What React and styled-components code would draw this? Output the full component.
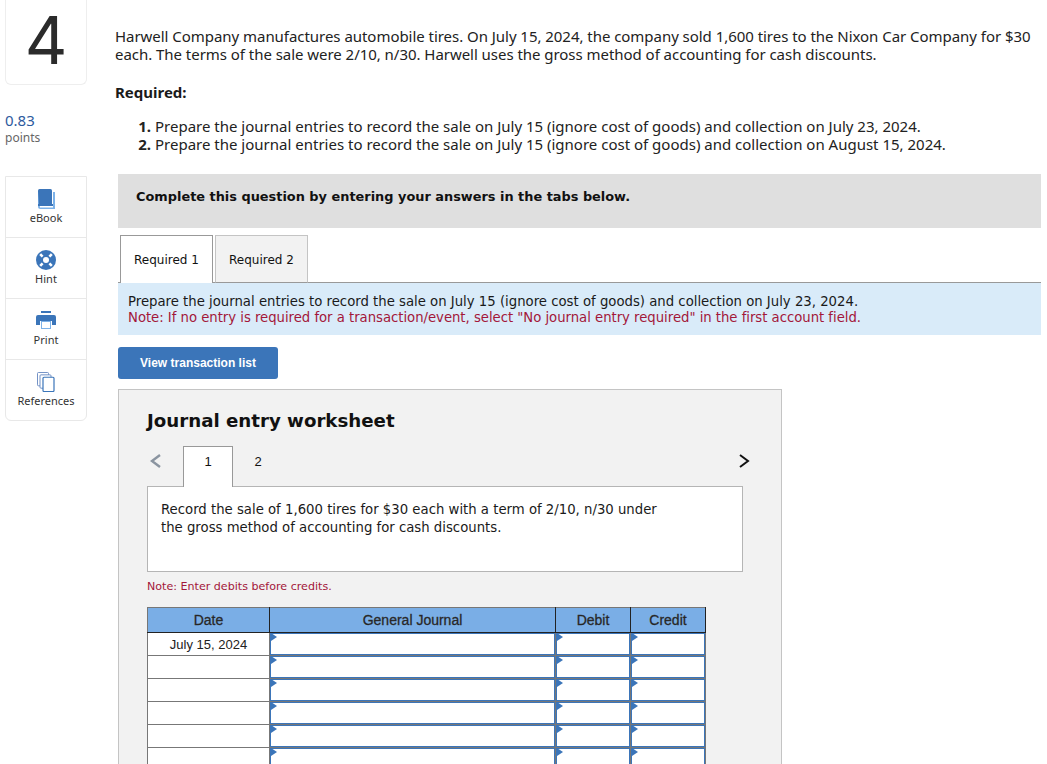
import React from 'react';
import styled, { createGlobalStyle } from 'styled-components';

const GlobalStyle = createGlobalStyle`
  html, body {
    margin: 0;
    padding: 0;
    background: #fff;
    height: 764px;
    overflow: hidden;
  }
`;

const sansStack = '"Noto Sans", "Open Sans", sans-serif';
const verdanaStack = '"DejaVu Sans", Verdana, sans-serif';
const arialStack = '"Liberation Sans", Arial, sans-serif';

const Page = styled.div`
  display: flex;
  width: 1041px;
  height: 764px;
  overflow: hidden;
  font-family: ${sansStack};
  color: #1a1a1a;
`;

const Sidebar = styled.aside`
  width: 82px;
  margin-left: 5px;
  flex-shrink: 0;
`;

const NumberCard = styled.div`
  height: 85px;
  box-sizing: border-box;
  border: 1px solid #eeeeee;
  border-top: none;
  border-radius: 0 0 6px 6px;
  display: flex;
  justify-content: center;
  align-items: flex-start;
  font-family: Inter, sans-serif;
  font-size: 66px;
  line-height: 80px;
  color: #2b2b2b;
`;

const Points = styled.div`
  margin-top: 26px;
  height: 65px;
`;

const PointsValue = styled.div`
  font-size: 15px;
  line-height: 18px;
  color: #2d5a9e;
`;

const PointsLabel = styled.div`
  font-size: 12px;
  line-height: 16px;
  padding-top: 1px;
  color: #666;
`;

const ToolCard = styled.div`
  border: 1px solid #e8e8e8;
  border-radius: 0 0 6px 6px;
  display: flex;
  flex-direction: column;
`;

const ToolItem = styled.div`
  height: 60px;
  box-sizing: border-box;
  padding-top: 12px;
  display: flex;
  flex-direction: column;
  align-items: center;
  font-size: 11px;
  line-height: 14px;
  color: #333;
  & + & {
    border-top: 1px solid #e8e8e8;
    height: 61px;
  }
  svg {
    display: block;
    margin-bottom: 2px;
  }
`;

const Main = styled.main`
  flex: 1;
  margin-left: 31px;
  min-width: 0;
`;

const Intro = styled.div`
  margin: 27px 0 0 -3px;
  white-space: nowrap;
  font-size: 15px;
  line-height: 18px;
  letter-spacing: -0.04px;
  color: #222;
`;

const RequiredHeading = styled.div`
  margin: 20px 0 0 -3px;
  font-size: 15px;
  line-height: 18px;
  font-weight: 700;
`;

const RequiredList = styled.ol`
  margin: 16px 0 0;
  padding: 0;
  list-style: none;
  font-size: 15px;
  line-height: 18px;
  white-space: nowrap;
  color: #222;
`;

const RequiredItem = styled.li`
  display: flex;
  gap: 4px;
`;

const ItemNumber = styled.b`
  width: 33px;
  text-align: right;
  font-weight: 700;
`;

const Banner = styled.div`
  margin-top: 21px;
  height: 54px;
  box-sizing: border-box;
  padding: 14px 18px 0;
  background: #dfdfdf;
  font-family: ${verdanaStack};
  font-size: 12.9px;
  line-height: 18px;
  font-weight: 700;
  color: #111;
`;

const TabRow = styled.div`
  margin-top: 7px;
  height: 48px;
  box-sizing: border-box;
  padding-left: 2px;
  display: flex;
  gap: 2px;
  border-bottom: 1px solid #999;
`;

const Tab = styled.div`
  width: ${p => p.$width}px;
  height: 48px;
  box-sizing: border-box;
  padding-top: ${p => (p.$active ? 0 : 1)}px;
  display: flex;
  align-items: center;
  justify-content: center;
  font-family: ${verdanaStack};
  font-size: 12px;
  background: ${p => (p.$active ? '#fff' : '#f2f2f2')};
  border: 1px solid ${p => (p.$active ? '#999' : '#c4c4c4')};
  border-bottom: ${p => (p.$active ? 'none' : '1px solid #999')};
  color: #111;
`;

const InfoBox = styled.div`
  height: 52px;
  box-sizing: border-box;
  padding: 11px 10px 0;
  background: #d9ebf9;
  font-family: ${verdanaStack};
  font-size: 13.25px;
  line-height: 16px;
  color: #1a1a1a;
  white-space: nowrap;
`;

const RedNote = styled.div`
  color: #a3173a;
  letter-spacing: -0.03px;
`;

const ListButton = styled.button`
  display: block;
  margin-top: 12px;
  width: 160px;
  height: 32px;
  padding: 0;
  border: none;
  border-radius: 3px;
  background: #3b75b9;
  color: #fff;
  font-family: ${arialStack};
  font-size: 12px;
  font-weight: 700;
`;

const Worksheet = styled.section`
  margin-top: 10px;
  width: 664px;
  height: 500px;
  box-sizing: border-box;
  padding: 0 28px;
  background: #f2f2f2;
  border: 1px solid #c4c4c4;
`;

const WorksheetTitle = styled.h2`
  margin: 19px 0 0;
  font-family: ${verdanaStack};
  font-size: 18.2px;
  line-height: 24px;
  font-weight: 700;
  color: #111;
`;

const StepRow = styled.div`
  margin-top: 13px;
  height: 40px;
  display: flex;
  align-items: flex-start;
  position: relative;
  z-index: 1;
`;

const Arrow = styled.svg`
  display: block;
  flex-shrink: 0;
  margin-top: 7px;
`;

const StepTab = styled.div`
  width: 50px;
  height: 41px;
  box-sizing: border-box;
  display: flex;
  align-items: center;
  justify-content: center;
  padding-bottom: 11px;
  font-family: ${arialStack};
  font-size: 13px;
  color: #111;
  background: ${p => (p.$active ? '#fff' : 'transparent')};
  border: 1px solid ${p => (p.$active ? '#999' : 'transparent')};
  border-bottom: none;
`;

const StepSpacer = styled.div`
  flex: 1;
`;

const Prompt = styled.div`
  width: 596px;
  height: 86px;
  box-sizing: border-box;
  padding: 14px 13px 0;
  background: #fff;
  border: 1px solid #b5b5b5;
  font-family: ${verdanaStack};
  font-size: 13.25px;
  line-height: 18px;
  color: #1a1a1a;
`;

const DebitNote = styled.div`
  margin-top: 8px;
  font-family: ${verdanaStack};
  font-size: 11.1px;
  line-height: 14px;
  color: #a3173a;
`;

const Journal = styled.table`
  margin-top: 13px;
  width: 558px;
  table-layout: fixed;
  border-collapse: collapse;
  font-family: ${arialStack};
  font-size: 13px;
  color: #222;
`;

const HeadCell = styled.th`
  height: 24px;
  padding: 0;
  background: #7aaee6;
  font-size: 14px;
  font-weight: 400;
  -webkit-text-stroke: 0.3px #333;
  border: 1px solid #222;
  border-top-color: #777;
  &:first-child {
    border-left-color: #777;
  }
`;

const DateCell = styled.td`
  height: 22px;
  padding: 0;
  text-align: center;
  background: #fff;
  border: 1px solid #777;
`;

const EntryCell = styled.td`
  height: 22px;
  padding: 0;
  background: #fff;
  position: relative;
  border: 1px solid #777;
  box-shadow: inset 0 0 0 1px #3b75b9;
  &::before {
    content: '';
    position: absolute;
    left: 1px;
    top: 0;
    border-left: 6px solid #3b75b9;
    border-top: 4px solid transparent;
    border-bottom: 4px solid transparent;
  }
`;

const BookIcon = () => (
  <svg width="18" height="20" viewBox="0 0 18 20">
    <rect x="1" y="0" width="14" height="16" rx="1.5" fill="#3b75b9" />
    <path d="M1 2v15.500A2.500 2.500 0 0 0 3.500 20H18V3h-2v13H4a2 2 0 0 0-2 2" fill="#7db2e8" />
    <rect x="1" y="15" width="15" height="2" fill="#3b75b9" />
    <rect x="3" y="17" width="13" height="1.500" fill="#fff" />
  </svg>
);

const HintIcon = () => (
  <svg width="20" height="20" viewBox="0 0 20 20">
    <circle cx="10" cy="10" r="10" fill="#3b75b9" />
    <path d="M4.200 4.200l2.400 2.400M15.800 4.200l-2.400 2.400M4.200 15.800l2.400-2.400M15.800 15.800l-2.400-2.400" stroke="#fff" strokeWidth="2.600" />
    <circle cx="10" cy="10" r="3" fill="#fff" />
  </svg>
);

const PrintIcon = () => (
  <svg width="20" height="20" viewBox="0 0 20 20">
    <rect x="5" y="0" width="10" height="2" fill="#3b75b9" />
    <path d="M2 4h16a2 2 0 0 1 2 2v8h-4v-4H4v4H0V6a2 2 0 0 1 2-2z" fill="#3b75b9" />
    <rect x="5.500" y="10.500" width="9" height="7" fill="#fff" stroke="#7db2e8" />
  </svg>
);

const ReferenceIcon = () => (
  <svg width="18" height="20" viewBox="0 0 18 21" preserveAspectRatio="none">
    <rect x="0.500" y="0.500" width="11" height="14" rx="1" fill="#fff" stroke="#6f8fc4" />
    <rect x="3" y="3" width="11" height="14" rx="1" fill="#fff" stroke="#6f8fc4" />
    <rect x="6" y="5.500" width="11" height="15" rx="1" fill="#fff" stroke="#3b75b9" strokeWidth="1.200" />
  </svg>
);

const tools = [
  { label: 'eBook', Icon: BookIcon },
  { label: 'Hint', Icon: HintIcon },
  { label: 'Print', Icon: PrintIcon },
  { label: 'References', Icon: ReferenceIcon },
];

const rows = ['July 15, 2024', '', '', '', '', '', ''];

function App() {
  return (
    <Page>
      <GlobalStyle />
      <Sidebar>
        <NumberCard>4</NumberCard>
        <Points>
          <PointsValue>0.83</PointsValue>
          <PointsLabel>points</PointsLabel>
        </Points>
        <ToolCard>
          {tools.map(({ label, Icon }) => (
            <ToolItem key={label}>
              <Icon />
              {label}
            </ToolItem>
          ))}
        </ToolCard>
      </Sidebar>
      <Main>
        <Intro>
          Harwell Company manufactures automobile tires. On July 15, 2024, the company sold 1,600 tires to the Nixon Car Company for $30
          <br />
          each. The terms of the sale were 2/10, n/30. Harwell uses the gross method of accounting for cash discounts.
        </Intro>
        <RequiredHeading>Required:</RequiredHeading>
        <RequiredList>
          <RequiredItem>
            <ItemNumber>1.</ItemNumber>
            <span>Prepare the journal entries to record the sale on July 15 (ignore cost of goods) and collection on July 23, 2024.</span>
          </RequiredItem>
          <RequiredItem>
            <ItemNumber>2.</ItemNumber>
            <span>Prepare the journal entries to record the sale on July 15 (ignore cost of goods) and collection on August 15, 2024.</span>
          </RequiredItem>
        </RequiredList>
        <Banner>Complete this question by entering your answers in the tabs below.</Banner>
        <TabRow>
          <Tab $active $width={93}>Required 1</Tab>
          <Tab $width={93}>Required 2</Tab>
        </TabRow>
        <InfoBox>
          Prepare the journal entries to record the sale on July 15 (ignore cost of goods) and collection on July 23, 2024.
          <RedNote>Note: If no entry is required for a transaction/event, select "No journal entry required" in the first account field.</RedNote>
        </InfoBox>
        <ListButton>View transaction list</ListButton>
        <Worksheet>
          <WorksheetTitle>Journal entry worksheet</WorksheetTitle>
          <StepRow>
            <Arrow width="36" height="16" viewBox="0 0 36 16">
              <path d="M13 2L5 8l8 6" fill="none" stroke="#8a94a0" strokeWidth="2.400" />
            </Arrow>
            <StepTab $active>1</StepTab>
            <StepTab>2</StepTab>
            <StepSpacer />
            <Arrow width="17" height="16" viewBox="0 0 17 16">
              <path d="M4 2l8 6-8 6" fill="none" stroke="#111" strokeWidth="2" />
            </Arrow>
          </StepRow>
          <Prompt>
            Record the sale of 1,600 tires for $30 each with a term of 2/10, n/30 under
            <br />
            the gross method of accounting for cash discounts.
          </Prompt>
          <DebitNote>Note: Enter debits before credits.</DebitNote>
          <Journal>
            <colgroup>
              <col width="122" />
              <col width="286" />
              <col width="75" />
              <col width="75" />
            </colgroup>
            <thead>
              <tr>
                <HeadCell>Date</HeadCell>
                <HeadCell>General Journal</HeadCell>
                <HeadCell>Debit</HeadCell>
                <HeadCell>Credit</HeadCell>
              </tr>
            </thead>
            <tbody>
              {rows.map((date, i) => (
                <tr key={i}>
                  <DateCell>{date}</DateCell>
                  <EntryCell />
                  <EntryCell />
                  <EntryCell />
                </tr>
              ))}
            </tbody>
          </Journal>
        </Worksheet>
      </Main>
    </Page>
  );
}

export default App;
